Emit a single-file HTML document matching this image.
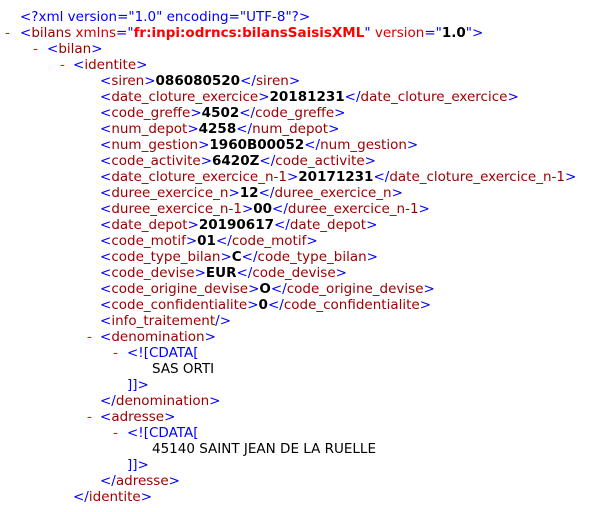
<!DOCTYPE html>
<html><head><meta charset="utf-8"><style>
body{margin:0;background:#fff;width:590px;height:510px;overflow:hidden;font-family:"DejaVu Sans","Liberation Sans",sans-serif;font-size:13.5px;}
.l{position:absolute;height:16px;line-height:16px;white-space:pre;}
.m{color:#0000ff}.t{color:#990000}.d{color:#ff0000;position:absolute}
.v{font-weight:bold;color:#000}.an{color:#cc0000}.av{color:#ff0000;font-weight:bold}
.tx{color:#000}
</style></head><body>
<div style="position:absolute;left:0;top:2px;width:590px;height:510px">
<div class="l" style="top:7px;left:20px"><span class="m">&lt;?xml version="1.0" encoding="UTF-8"?&gt;</span></div>
<div class="l d" style="top:23px;left:5px">-</div>
<div class="l" style="top:23px;left:20px"><span class="m">&lt;</span><span class="t">bilans</span> <span class="an">xmlns</span><span class="m">="</span><span class="av">fr:inpi:odrncs:bilansSaisisXML</span><span class="m">"</span> <span class="an">version</span><span class="m">="</span><span class="v">1.0</span><span class="m">"&gt;</span></div>
<div class="l d" style="top:39px;left:33px">-</div>
<div class="l" style="top:39px;left:47px"><span class="m">&lt;</span><span class="t">bilan</span><span class="m">&gt;</span></div>
<div class="l d" style="top:55px;left:60px">-</div>
<div class="l" style="top:55px;left:73px"><span class="m">&lt;</span><span class="t">identite</span><span class="m">&gt;</span></div>
<div class="l" style="top:71px;left:100px"><span class="m">&lt;</span><span class="t">siren</span><span class="m">&gt;</span><span class="v">086080520</span><span class="m">&lt;/</span><span class="t">siren</span><span class="m">&gt;</span></div>
<div class="l" style="top:87px;left:100px"><span class="m">&lt;</span><span class="t">date_cloture_exercice</span><span class="m">&gt;</span><span class="v">20181231</span><span class="m">&lt;/</span><span class="t">date_cloture_exercice</span><span class="m">&gt;</span></div>
<div class="l" style="top:103px;left:100px"><span class="m">&lt;</span><span class="t">code_greffe</span><span class="m">&gt;</span><span class="v">4502</span><span class="m">&lt;/</span><span class="t">code_greffe</span><span class="m">&gt;</span></div>
<div class="l" style="top:119px;left:100px"><span class="m">&lt;</span><span class="t">num_depot</span><span class="m">&gt;</span><span class="v">4258</span><span class="m">&lt;/</span><span class="t">num_depot</span><span class="m">&gt;</span></div>
<div class="l" style="top:135px;left:100px"><span class="m">&lt;</span><span class="t">num_gestion</span><span class="m">&gt;</span><span class="v">1960B00052</span><span class="m">&lt;/</span><span class="t">num_gestion</span><span class="m">&gt;</span></div>
<div class="l" style="top:151px;left:100px"><span class="m">&lt;</span><span class="t">code_activite</span><span class="m">&gt;</span><span class="v">6420Z</span><span class="m">&lt;/</span><span class="t">code_activite</span><span class="m">&gt;</span></div>
<div class="l" style="top:167px;left:100px"><span class="m">&lt;</span><span class="t">date_cloture_exercice_n-1</span><span class="m">&gt;</span><span class="v">20171231</span><span class="m">&lt;/</span><span class="t">date_cloture_exercice_n-1</span><span class="m">&gt;</span></div>
<div class="l" style="top:183px;left:100px"><span class="m">&lt;</span><span class="t">duree_exercice_n</span><span class="m">&gt;</span><span class="v">12</span><span class="m">&lt;/</span><span class="t">duree_exercice_n</span><span class="m">&gt;</span></div>
<div class="l" style="top:199px;left:100px"><span class="m">&lt;</span><span class="t">duree_exercice_n-1</span><span class="m">&gt;</span><span class="v">00</span><span class="m">&lt;/</span><span class="t">duree_exercice_n-1</span><span class="m">&gt;</span></div>
<div class="l" style="top:215px;left:100px"><span class="m">&lt;</span><span class="t">date_depot</span><span class="m">&gt;</span><span class="v">20190617</span><span class="m">&lt;/</span><span class="t">date_depot</span><span class="m">&gt;</span></div>
<div class="l" style="top:231px;left:100px"><span class="m">&lt;</span><span class="t">code_motif</span><span class="m">&gt;</span><span class="v">01</span><span class="m">&lt;/</span><span class="t">code_motif</span><span class="m">&gt;</span></div>
<div class="l" style="top:247px;left:100px"><span class="m">&lt;</span><span class="t">code_type_bilan</span><span class="m">&gt;</span><span class="v">C</span><span class="m">&lt;/</span><span class="t">code_type_bilan</span><span class="m">&gt;</span></div>
<div class="l" style="top:263px;left:100px"><span class="m">&lt;</span><span class="t">code_devise</span><span class="m">&gt;</span><span class="v">EUR</span><span class="m">&lt;/</span><span class="t">code_devise</span><span class="m">&gt;</span></div>
<div class="l" style="top:279px;left:100px"><span class="m">&lt;</span><span class="t">code_origine_devise</span><span class="m">&gt;</span><span class="v">O</span><span class="m">&lt;/</span><span class="t">code_origine_devise</span><span class="m">&gt;</span></div>
<div class="l" style="top:295px;left:100px"><span class="m">&lt;</span><span class="t">code_confidentialite</span><span class="m">&gt;</span><span class="v">0</span><span class="m">&lt;/</span><span class="t">code_confidentialite</span><span class="m">&gt;</span></div>
<div class="l" style="top:311px;left:100px"><span class="m">&lt;</span><span class="t">info_traitement</span><span class="m">/&gt;</span></div>
<div class="l d" style="top:327px;left:87px">-</div>
<div class="l" style="top:327px;left:100px"><span class="m">&lt;</span><span class="t">denomination</span><span class="m">&gt;</span></div>
<div class="l d" style="top:343px;left:113px">-</div>
<div class="l" style="top:343px;left:127px"><span class="m">&lt;![CDATA[</span></div>
<div class="l tx" style="top:359px;left:152px">SAS ORTI</div>
<div class="l" style="top:375px;left:127px"><span class="m">]]&gt;</span></div>
<div class="l" style="top:391px;left:100px"><span class="m">&lt;/</span><span class="t">denomination</span><span class="m">&gt;</span></div>
<div class="l d" style="top:407px;left:87px">-</div>
<div class="l" style="top:407px;left:100px"><span class="m">&lt;</span><span class="t">adresse</span><span class="m">&gt;</span></div>
<div class="l d" style="top:423px;left:113px">-</div>
<div class="l" style="top:423px;left:127px"><span class="m">&lt;![CDATA[</span></div>
<div class="l tx" style="top:439px;left:152px">45140 SAINT JEAN DE LA RUELLE</div>
<div class="l" style="top:455px;left:127px"><span class="m">]]&gt;</span></div>
<div class="l" style="top:471px;left:100px"><span class="m">&lt;/</span><span class="t">adresse</span><span class="m">&gt;</span></div>
<div class="l" style="top:487px;left:73px"><span class="m">&lt;/</span><span class="t">identite</span><span class="m">&gt;</span></div>
</div>
</body></html>
